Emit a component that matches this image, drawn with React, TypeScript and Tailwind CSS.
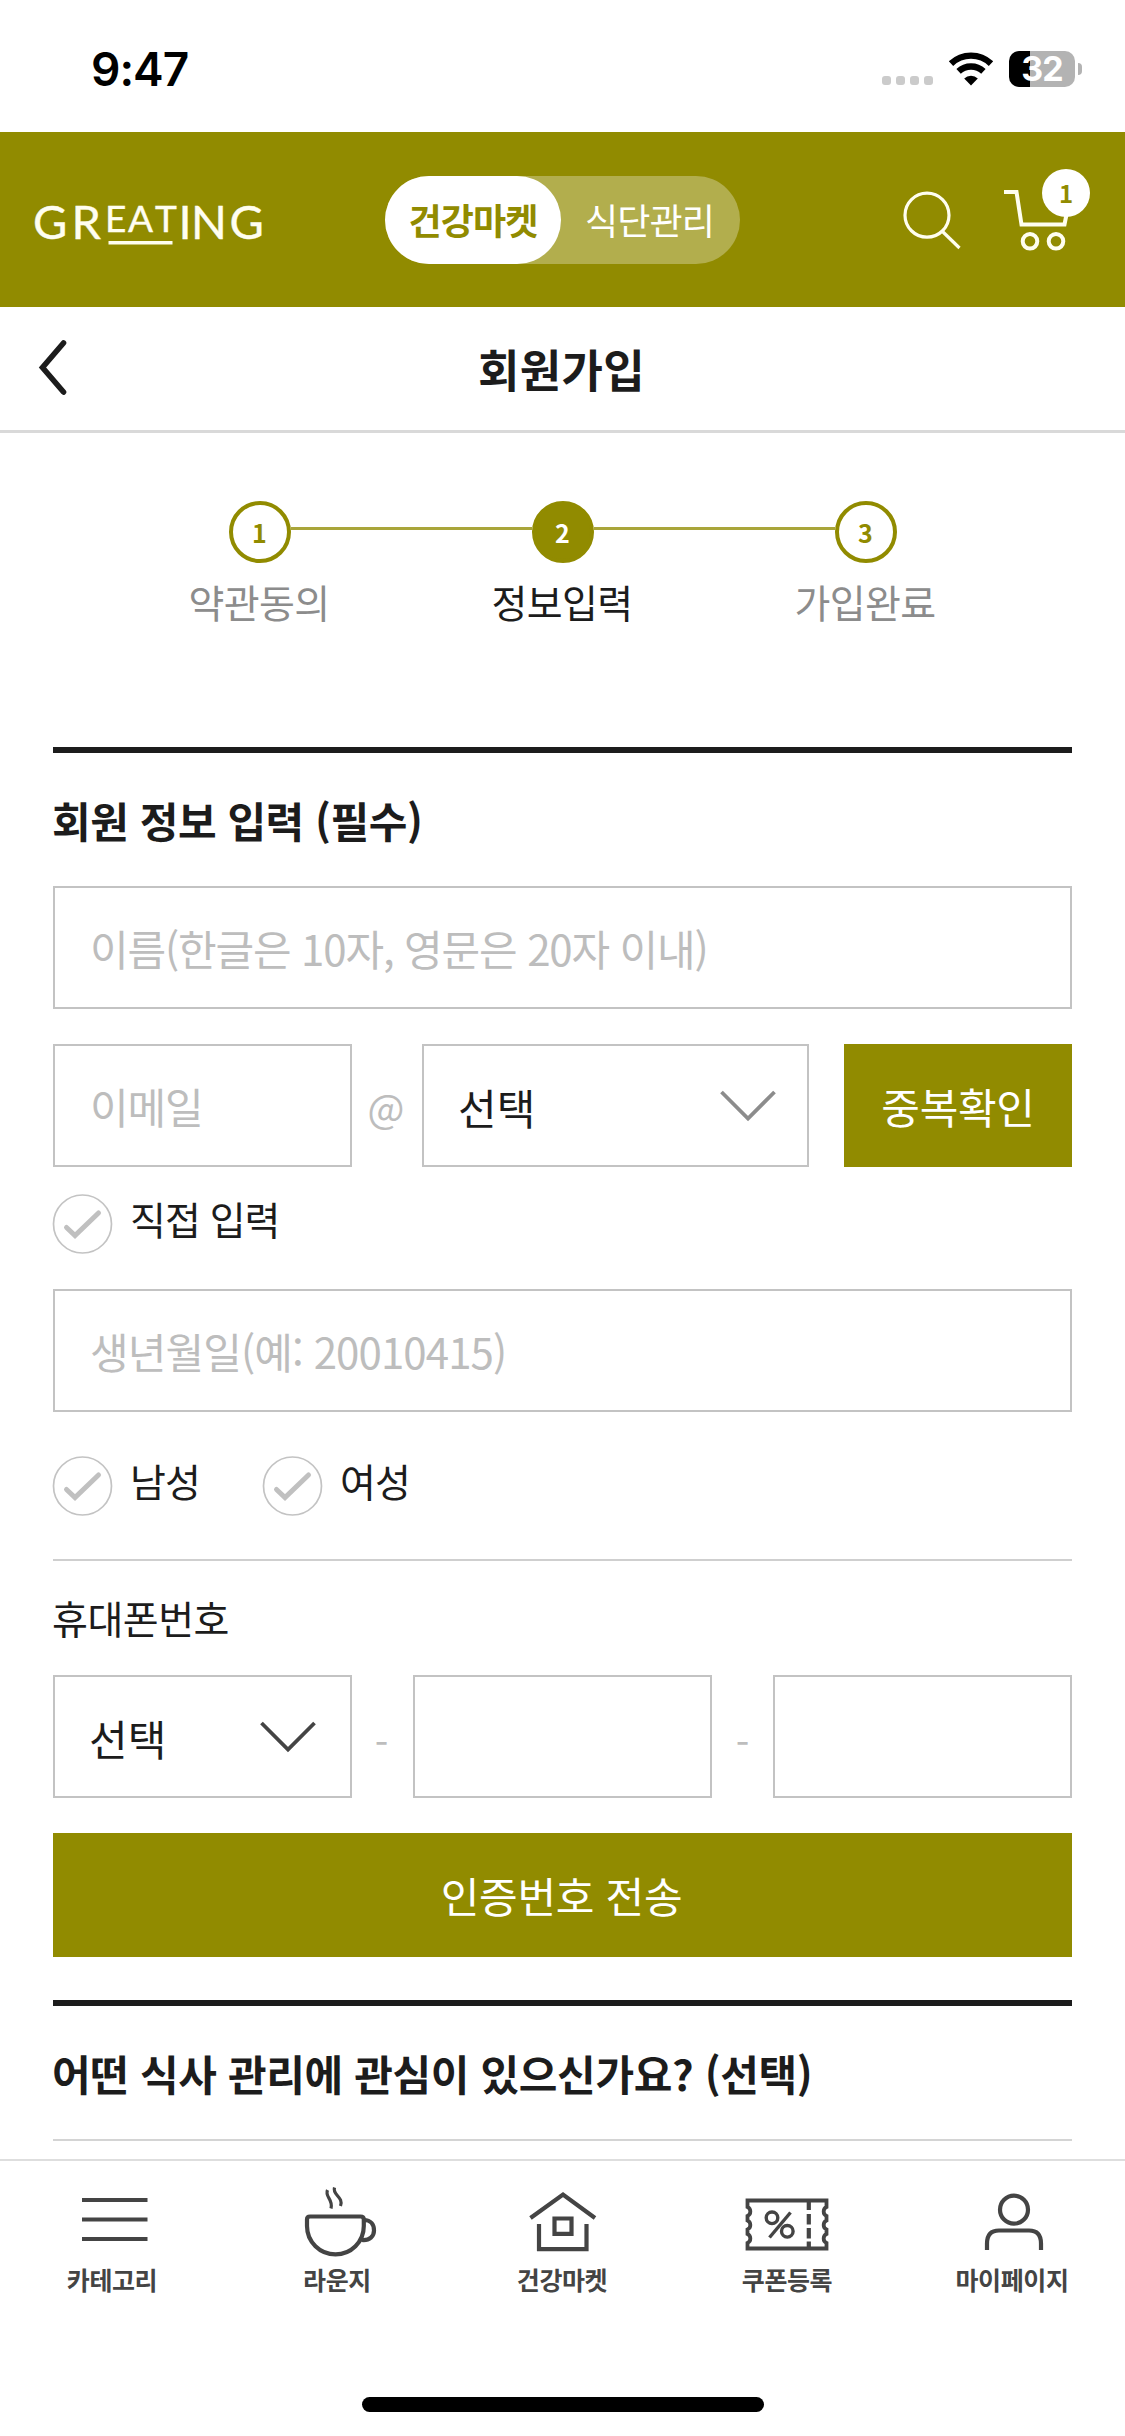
import type { ReactNode } from 'react';

const KR = 'font-["Noto_Sans_CJK_KR",sans-serif]';

function StatusBar() {
  return (
    <div className="flex h-[132px] items-start justify-between bg-white pl-[91px] pr-[43px] pt-[42px]">
      <span className="font-['Inter',sans-serif] text-[46px] leading-[54px] font-semibold tracking-[-1px] text-black">9:47</span>
      <div className="flex items-start">
        <div className="mt-[34px] flex gap-[5px]">
          {[0, 1, 2, 3].map((i) => (
            <i key={i} className="size-[9px] rounded-[3px] bg-[#cbcbcb]" />
          ))}
        </div>
        <svg className="mt-[9px] ml-[15px]" width="46" height="36" viewBox="0 0 46 36" fill="none" stroke="#000" strokeWidth="6.4">
          <path d="M3 12.6a29 29 0 0 1 40 0" />
          <path d="M10.6 20.4a18 18 0 0 1 24.8 0" />
          <path d="M23 34.5l-6.8-7a9.6 9.6 0 0 1 13.6 0z" fill="#000" stroke="none" />
        </svg>
        <div className="mt-[9px] ml-[15px] flex h-9 w-[66px] items-center justify-center rounded-[10px] bg-[linear-gradient(to_right,#000_21px,#b3b3b3_21px)]">
          <span className="font-['Inter',sans-serif] text-[34px] leading-[42px] font-bold tracking-[-1px] text-white">32</span>
        </div>
        <i className="mt-[21px] ml-[3px] h-3 w-1 rounded-r-full bg-[#b3b3b3]" />
      </div>
    </div>
  );
}

function Header() {
  return (
    <header className="flex h-[175px] items-center bg-[#918b00]">
      <svg className="ml-[33px] shrink-0" width="234" height="60" viewBox="33 190 234 60" fill="#fffef0" stroke="#fffef0" strokeWidth="0.4" fontFamily="Lato, sans-serif">
        <text x="33 71.500" y="239" fontSize="47">GR</text>
        <text x="105 128 155" y="232" fontSize="37">EAT</text>
        <text x="178.5 191 229.5" y="239" fontSize="47">ING</text>
        <path d="M108.500 242.700h64" strokeWidth="3.600" />
      </svg>
      <div className="ml-[118px] flex h-[88px] w-[355px] shrink-0 rounded-full bg-white/30 text-[36px] leading-[86px] tracking-[-0.9px]">
        <span className="w-[176px] rounded-full bg-white text-center font-bold text-[#918b00]">건강마켓</span>
        <span className="w-[177px] text-center text-white">식단관리</span>
      </div>
      <svg className="ml-[162px] shrink-0" width="60" height="60" viewBox="902 190 60 60" fill="none" stroke="#fffef0" strokeWidth="3.200">
        <circle cx="927" cy="215.200" r="22" />
        <path d="M942.500 231.500L959.500 248" />
      </svg>
      <div className="relative ml-[40px] h-[88px] w-[90px] shrink-0">
        <svg className="absolute top-0 left-0" width="90" height="88" viewBox="1002 176 90 88" fill="none" stroke="#fffef0" strokeWidth="4">
          <path d="M1004 192h12.500l5 32.500h43l4-20" />
          <circle cx="1030" cy="241.300" r="7.300" />
          <circle cx="1056" cy="241.300" r="7.300" />
        </svg>
        <span className="absolute -top-[7px] left-10 flex size-12 items-center justify-center rounded-full bg-white text-[24px] leading-none font-bold text-[#918b00]">1</span>
      </div>
    </header>
  );
}

function TitleBar() {
  return (
    <div className="grid h-[126px] grid-cols-3 items-center border-b-[3px] border-[#d9d9d9]">
      <svg className="ml-[38px]" width="30" height="60" viewBox="0 0 30 60" fill="none" stroke="#1c1c1c" strokeWidth="5.600" strokeLinecap="round">
        <path d="M25.500 4L4.500 28.500L25.500 53" />
      </svg>
      <h1 className="-ml-[2px] text-center text-[45px] leading-[66px] font-bold tracking-[0.3px]">회원가입</h1>
    </div>
  );
}

function Step({ n, label, active, left, right }: { n: number; label: string; active?: boolean; left?: boolean; right?: boolean }) {
  const line = 'h-[3px] flex-1 -translate-y-1';
  return (
    <li>
      <div className="flex items-center">
        <i className={`${line} ${left ? 'bg-[#a9a53a]' : ''}`} />
        <span
          className={`flex size-[62px] items-center justify-center rounded-full border-[4px] border-[#918b00] text-[25px] leading-none font-bold ${
            active ? 'bg-[#918b00] text-white' : 'text-[#918b00]'
          }`}
        >
          {n}
        </span>
        <i className={`${line} ${right ? 'bg-[#a9a53a]' : ''}`} />
      </div>
      <p className={`mt-[10px] -ml-px text-center text-[39px] leading-[57px] tracking-[-0.6px] ${active ? 'text-[#1c1c1c]' : 'text-[#8c8c8c]'}`}>{label}</p>
    </li>
  );
}

function Field({ placeholder, className = 'tracking-[-1.15px]' }: { placeholder?: string; className?: string }) {
  return (
    <input
      placeholder={placeholder}
      className={`block h-[123px] border-2 border-[#c3c3c3] px-[35px] text-[42px] outline-none placeholder:text-[#bdbdbd] placeholder:opacity-100 ${className}`}
    />
  );
}

function Select({ className, color }: { className: string; color: string }) {
  return (
    <button className={`flex h-[123px] items-center justify-between border-2 border-[#c3c3c3] pl-[34px] text-[42px] leading-[60px] ${className}`}>
      <span className="pt-[2px]">선택</span>
      <svg width="56" height="34" viewBox="0 0 56 34" fill="none" stroke={color} strokeWidth="3.800">
        <path d="M1.500 3L28 29.500L54.500 3" />
      </svg>
    </button>
  );
}

function Check({ label, className = '' }: { label: string; className?: string }) {
  return (
    <label className={`flex h-[60px] items-center ${className}`}>
      <svg className="-ml-px" width="61" height="60" viewBox="0 0 61 60" fill="none">
        <circle cx="30.500" cy="30" r="29" stroke="#c3c3c3" strokeWidth="1.700" />
        <path d="M14.500 33.500L23 41.500L46.500 19" stroke="#c0c0c0" strokeWidth="5" strokeLinecap="round" />
      </svg>
      <span className="-mt-[12px] ml-[17px] text-[39px] leading-[56px] tracking-[-1px]">{label}</span>
    </label>
  );
}

function NavItem({ label, children }: { label: string; children: ReactNode }) {
  return (
    <li className="flex flex-col items-center">
      <svg width="100" height="80" viewBox="0 0 100 80" fill="none" stroke="#444" strokeWidth="4.200">
        {children}
      </svg>
      <span className="-ml-px text-[25px] leading-[37px] font-bold tracking-[-0.4px] text-[#444]">{label}</span>
    </li>
  );
}

function BottomNav() {
  return (
    <nav className="mt-[18px] flex h-[277px] flex-col items-center border-t-2 border-[#dedede] bg-white">
      <ul className="mt-5 grid w-full grid-cols-5">
        <NavItem label="카테고리">
          <path d="M19 19h65.500M19 38.500h65.500M19 58h65.500" />
        </NavItem>
        <NavItem label="라운지">
          <path d="M22 35.500H72.500Q75.800 35.500 75.800 38.500V45C75.800 61 63 73.300 47.500 73.300S19 61 19 45V38.500Q19 35.500 22 35.500Z" />
          <path d="M76 39C83 39 86 44 86 49.500S82 60 73.500 59" />
          <path d="M39.500 9C36.500 16 45.500 18 43 27.500M46.500 6.500C44 14 56 16 52.500 25" strokeWidth="3.200" />
        </NavItem>
        <NavItem label="건강마켓">
          <path d="M17.500 37L50 13.500L82 37M26 43V68.200H73.500V43M41.500 37.500H58.500V52.800H41.500Z" />
        </NavItem>
        <NavItem label="쿠폰등록">
          <path d="M9.500 19.500H88.500V26a5 5 0 0 0 0 9v4.500a5 5 0 0 0 0 9v4.500a5 5 0 0 0 0 9v5.500H9.500V62a5 5 0 0 0 0-9v-4.500a5 5 0 0 0 0-9V35a5 5 0 0 0 0-9Z" strokeWidth="3.800" />
          <path d="M70.800 20v9M70.800 33v10.500M70.800 47v10.500M70.800 60.500v6" />
          <circle cx="34" cy="36.800" r="5.800" strokeWidth="3.400" />
          <circle cx="49.300" cy="50.300" r="5.800" strokeWidth="3.400" />
          <path d="M31.500 56.500L52.500 31.500" strokeWidth="3.400" />
        </NavItem>
        <NavItem label="마이페이지">
          <circle cx="51" cy="28.700" r="14" />
          <path d="M24 69V62.500Q24 49.500 36 49.500H66Q78 49.500 78 62.500V69" />
        </NavItem>
      </ul>
      <i className="mt-[99px] h-[15px] w-[402px] rounded-full bg-black" />
    </nav>
  );
}

export default function App() {
  return (
    <div lang="ko" className={`h-[2436px] w-[1125px] overflow-hidden bg-white text-[#1c1c1c] ${KR}`}>
      <StatusBar />
      <Header />
      <TitleBar />
      <ol className="mx-auto mt-[68px] grid w-[909px] grid-cols-3">
        <Step n={1} label="약관동의" right />
        <Step n={2} label="정보입력" active left right />
        <Step n={3} label="가입완료" left />
      </ol>
      <main className="px-[53px]">
        <section className="mt-[117px] border-t-[6px] border-[#1c1c1c]">
          <h2 className="-ml-px h-[133px] text-[42px] leading-[133px] font-bold tracking-[-0.45px]">회원 정보 입력 (필수)</h2>
          <Field placeholder="이름(한글은 10자, 영문은 20자 이내)" className="w-full tracking-[-1.15px]" />
          <div className="mt-[35px] flex items-center">
            <Field placeholder="이메일" className="w-[299px] tracking-[-1.1px]" />
            <span className="w-[70px] pr-[2px] text-center text-[39px] leading-[60px] text-[#bdbdbd]">@</span>
            <Select className="w-[387px] pr-[31px]" color="#8c8c8c" />
            <button className="ml-[35px] h-[123px] flex-1 bg-[#918b00] text-[42px] tracking-[-0.3px] text-white">중복확인</button>
          </div>
          <Check label="직접 입력" className="mt-[27px]" />
          <Field placeholder="생년월일(예: 20010415)" className="mt-[35px] w-full tracking-[-0.9px]" />
          <div className="mt-[44px] flex">
            <Check label="남성" className="w-[210px]" />
            <Check label="여성" />
          </div>
          <hr className="mt-[43px] border-t-2 border-[#cfcfcf]" />
          <h3 className="-ml-px h-[114px] text-[39px] leading-[112px] tracking-[-0.5px]">휴대폰번호</h3>
          <div className="flex items-center">
            <Select className="w-[299px] pr-[34px]" color="#444" />
            <span className="w-[61px] pt-2 pr-[2px] text-center text-[39px] leading-[60px] text-[#bdbdbd]">-</span>
            <Field className="w-[299px]" />
            <span className="w-[61px] pt-2 text-center text-[39px] leading-[60px] text-[#bdbdbd]">-</span>
            <Field className="w-[299px]" />
          </div>
          <button className="mt-[35px] block h-[124px] w-full bg-[#918b00] pr-[2px] pb-[2px] text-[42px] tracking-[-0.3px] text-white">인증번호 전송</button>
        </section>
        <section className="mt-[43px] border-t-[6px] border-b-2 border-t-[#1c1c1c] border-b-[#d4d4d4]">
          <h2 className="-ml-px text-[42px] leading-[133px] font-bold tracking-[-0.35px]">어떤 식사 관리에 관심이 있으신가요? (선택)</h2>
        </section>
      </main>
      <BottomNav />
    </div>
  );
}
